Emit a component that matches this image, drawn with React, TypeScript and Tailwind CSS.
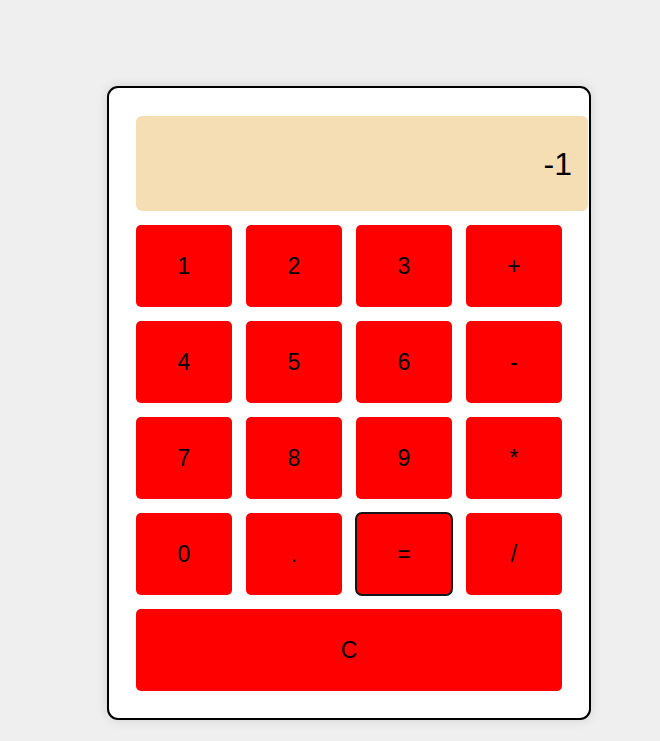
const KEYS = ["1", "2", "3", "+", "4", "5", "6", "-", "7", "8", "9", "*", "0", ".", "=", "/"];

export default function App() {
  return (
    <div className="min-h-[741px] bg-[#efefef] pt-[86px] pl-[107px] font-['Liberation_Sans',Arial,sans-serif]">
      <div className="w-[484px] h-[634px] border-2 border-black rounded-[11px] bg-white pt-[28px] pl-[27px] shadow-[0_0_12px_rgba(0,0,0,0.12)]">
        {/* display */}
        <div className="w-[452px] h-[95px] rounded-[6px] bg-[#f5deb3] flex items-center justify-end pr-[16px] text-[32px] text-black">
          -1
        </div>

        <div className="w-[426px] mt-[14px] grid grid-cols-4 gap-[14px]">
          {KEYS.map((k) => (
            <button
              key={k}
              className={`h-[82px] rounded-[5px] bg-[#ff0000] text-[23px] text-black flex items-center justify-center ${
                k === "=" ? "outline-2 outline-[#151515] outline-offset-[-1px] rounded-[6px]" : ""
              }`}
            >
              {k}
            </button>
          ))}
          <button className="col-span-4 h-[82px] rounded-[5px] bg-[#ff0000] text-[23px] text-black flex items-center justify-center">
            C
          </button>
        </div>
      </div>
    </div>
  );
}
